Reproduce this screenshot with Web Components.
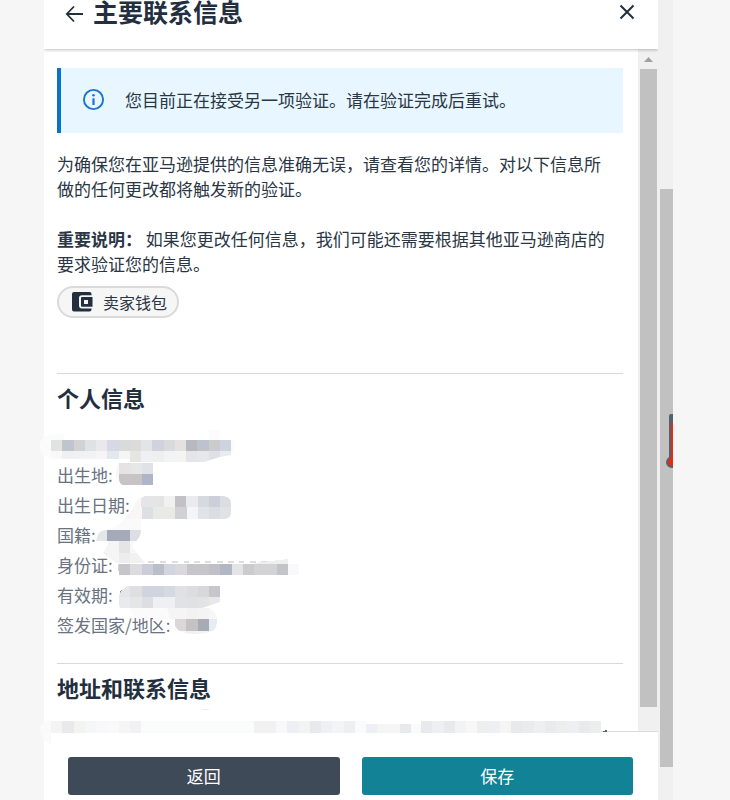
<!DOCTYPE html>
<html lang="zh-CN">
<head>
<meta charset="utf-8">
<title>主要联系信息</title>
<style>
html, body { height: 100%; margin: 0; }
body { background: #f6f6f6; color: #2a3644; font-family: "Noto Sans CJK SC", sans-serif; font-size: 17px; line-height: 25px; overflow: hidden; }
</style>
</head>
<body>
<contact-page></contact-page>
<script>
const define = (name, html, setup) => customElements.define(name, class extends HTMLElement {
  constructor() {
    super();
    this.attachShadow({ mode: 'open' }).innerHTML = html;
  }
});

define('scroll-track', `
<style>
:host { display: flex; flex-direction: column; background: #f0f0f0; box-sizing: border-box; }
i { display: block; flex: 0 0 auto; height: var(--thumb); background: #c1c1c1; }
</style><slot></slot><i></i>`);

define('dialog-header', `
<style>
:host { display: flex; align-items: center; height: 49px; padding: 0 20px 26px; box-sizing: border-box; background: #fff; color: #232f3e; position: relative; z-index: 1; box-shadow: 0 1px 3px rgba(0,0,0,.25); clip-path: inset(0 0 -6px 0); }
button { border: 0; background: none; padding: 0; display: block; flex: none; }
svg { display: block; }
h1 { margin: 0 auto 0 8px; padding-bottom: 2px; font-size: 25px; line-height: 34px; font-weight: 700; }
</style>
<button aria-label="返回"><svg width="21" height="22" viewBox="0 0 21 22" fill="none" stroke="#232f3e" stroke-width="1.8"><path d="M19 13H3M10 5.500L2.800 13L10 20.500"/></svg></button>
<h1><slot></slot></h1>
<button aria-label="关闭"><svg width="22" height="22" viewBox="0 0 22 22" fill="none" stroke="#232f3e" stroke-width="2"><path d="M4.500 4.500L17.500 17.500M17.500 4.500L4.500 17.500"/></svg></button>`);

define('info-alert', `
<style>
:host { display: flex; align-items: center; gap: 20px; height: 65px; box-sizing: border-box; padding: 0 0 2px 21px; border-left: 4px solid #0a72c8; background: #e8f6ff; }
svg { display: block; flex: none; }
</style>
<svg width="23" height="23" viewBox="0 0 23 23"><circle cx="11.500" cy="11.500" r="9.600" fill="none" stroke="#1a76cc" stroke-width="1.900"/><path d="M11.500 10.300V17" stroke="#1a76cc" stroke-width="2.200"/><circle cx="11.500" cy="7.200" r="1.300" fill="#1a76cc"/></svg>
<span><slot></slot></span>`);

define('wallet-chip', `
<style>
:host { display: flex; }
button { display: flex; align-items: center; gap: 10px; height: 32px; padding: 0 10px 1px 13px; border: 2px solid #d8dadb; border-radius: 16px; background: #f6f6f6; color: inherit; font: 16px/24px "Noto Sans CJK SC", sans-serif; }
</style>
<button><svg width="21" height="20" viewBox="0 0 21 20"><path fill="#232f3e" d="M2 0H17.500Q19.500 0 19.500 2V3.200H10Q7 3.200 7 6V13.500Q7 16.500 10 16.500H19.500V17.500Q19.500 19.500 17.500 19.500H2Q0 19.500 0 17.500V2Q0 0 2 0Z"/><path fill="#232f3e" fill-rule="evenodd" d="M10 5H20.500V14.800H10Q9 14.800 9 13.800V6Q9 5 10 5ZM12 8V12H16V8Z"/></svg><slot></slot></button>`);

define('info-section', `
<style>
:host { display: block; border-top: 1px solid #d8d9da; padding-top: 7px; }
h2 { margin: 0; font-size: 22px; line-height: 33px; font-weight: 700; color: #232f3e; }
</style><h2><slot name="title"></slot></h2><slot></slot>`);

define('detail-list', `
<style>
:host { display: block; position: relative; color: #687280; line-height: 30px; padding-top: 16px; }
</style><slot></slot>`);

define('detail-row', `<style>:host { display: block; height: 30px; }</style><slot></slot>`);

const cells = (x, y, h, colors) => colors.split(' ').map((c, i) => {
  const a = Math.round(x + i * 11.25), b = Math.round(x + (i + 1) * 11.25);
  return `<rect x="${a}" y="${y}" width="${b - a}" height="${h}" fill="#${c}"/>`;
}).join('');

/* Redaction painted over the personal values. */
define('personal-mask', `
<style>:host { position: absolute; left: -17px; top: 1px; pointer-events: none; } svg { display: block; }</style>
<svg width="270" height="223" viewBox="40 415 270 223" shape-rendering="crispEdges">
<defs>
<clipPath id="a"><path d="M51 440H231V455L220 457L204 462H130V459H64L51 456Z"/></clipPath>
<clipPath id="c"><path d="M119 463H153V485H123Q119 484 119 478Z"/></clipPath>
<clipPath id="d"><path d="M145 496H224Q231 497 231 504V513Q231 518 225 519H124L132 510L137 500Z"/></clipPath>
<clipPath id="e"><path d="M105 530H141Q141 538 133 544V548L145 563H116L103 553L108 544V541H96Q98 530 105 530Z"/></clipPath>
<clipPath id="g"><path d="M127 586H220V602L202 608H120Q116 600 121 591Z"/></clipPath>
<clipPath id="h"><path d="M167 608H209Q218 612 217 622Q216 633 206 633Q188 636 178 630L170 619Z"/></clipPath>
</defs>
<path fill="#fbfbfb" shape-rendering="auto" d="M51 434Q38 438 40 448Q41 456 51 459H64V434ZM209 430h10v10h-10zM231 439q8 4 0 14z"/>
<g clip-path="url(#a)">${cells(51, 440, 11, 'e2e2e2 bfc4ce d2d2d4 dee2e6 e9e9ec d5d9e3 d9dbda dddad9 e3e4e8 d0d3dc d9dadc e4e1e0 b8b9be bdc3cd cbcacd ced4de')}${cells(51, 451, 12, 'f8f8f8 f0f0f2 f1f1f3 f2f2f3 f5f5f5 e2e8ec f5f5f5 e6e5e3 eff0f3 edeff1 f2f4f3 f4f4f3 e3e5e9 e5e7ea dde1e6 e8ecf1')}</g>
<path fill="#f7f8f8" d="M119 462Q112 474 119 481Z"/>
<g clip-path="url(#c)">${cells(119, 463, 11, 'e6e3e4 e7e7e8 dfe2e9')}${cells(119, 474, 12, 'c8c4c5 c8c4c5 adb5c6')}</g>
<path fill="#fafafa" d="M124 519H141V530H105Q118 528 124 519Z"/>
<g clip-path="url(#d)">${cells(130, 496, 11, 'f8f7f6 e5e4e6 e5e4e4 f1f1f1 c3c1c5 e9ebef d5d9e0 cbcfda dbdde3')}${cells(119, 507, 12, 'f5f5f4 f8f7f6 dddfe5 e9e9e7 e9e9e7 d1d1d4 f2f6fa e1e3e6 dadee3 dfe2e7')}</g>
<g clip-path="url(#e)">${cells(96, 530, 11, 'e3e7e7 a4aab8 a4aab8 dddde3')}${cells(96, 541, 12, 'f5f5f5 f5f5f5 e5e5e6 f8f8f8')}${cells(96, 553, 12, 'ececed f5f5f5 ededee f1f1f2 f1f1f2')}</g>
<path d="M148 562h6m6 0h6m6 0h6m6 0h5m5 0h6m5 0h6m6 0h6m5 0h6m5 0h5m6 0h6m5 0h6" stroke="#dcdee0" stroke-width="2" fill="none"/>
<path fill="#efefef" d="M254 563L288 559V564H254Z"/>
<path fill="#d5d6da" d="M118 564h2v7h-2z"/>
${cells(119, 564, 11, 'c5c5ca dcdbe0 cbceda b9bec9 d1d5df dad8dc c6c5c8 c6c6ca bfc0c8 b1b7c4 e3e4e5 cbcacd d3d3d6 d3d3d6 c3c4c8 f9f9fc')}
<path d="M120 592l2-1" stroke="#606a78" stroke-width="2"/>
<g clip-path="url(#g)">${cells(119, 586, 11, 'e6e6e8 dfdfe1 cfd4df cfd4df d5d9e2 e1e1e3 dddde0 d8d8db c8c6cd e8e8e9')}${cells(119, 597, 12, 'e9eaee e5e6ea dcdee4 eff0f1 eff0f1 e1e2e5 e0e1e3 e3e3e4 e7e8ea')}</g>
<path fill="#fbfbfb" d="M130 608H175V620H153V618H134Z"/>
<g clip-path="url(#h)">${cells(164, 608, 11, 'f5f5f6 f5f5f6 f2f2f3 f4f4f5 f7f7f8')}${cells(175, 619, 12, 'd9d7d8 c5c2c2 a6abb5 e6ecf5')}${cells(175, 631, 4, 'f8f8f8 f1f1f2 f3f3f4')}</g>
</svg>`);

define('address-mask', `
<style>:host { position: absolute; left: -17px; top: 3px; z-index: 2; pointer-events: none; } svg { display: block; }</style>
<svg width="570" height="37" viewBox="40 707 570 37" shape-rendering="crispEdges">
<path fill="#eeeeef" d="M200 709h9v1h-6z"/>
<path fill="#fafafa" shape-rendering="auto" d="M51 719Q40 722 40 730Q41 740 51 744Z"/>
${cells(51, 721, 12, 'f4f4f5 e9e9ec f3f3f2 f5f6f8 f8f8fb f8fafa f6f5f6 f1f1f4 fafcfb fafcfb fafcfb fafcfb fafcfb fafcfb fafcfb fafcfb fafcfb fafcfb f1f1f2 f1f1f2 f8f8fa eeeef5 f3f3f4 e8e9ec eff0f3 f4f4f6 eeeff1 fafcfb')}
${cells(366, 724, 9, 'eeeff5 f5f5f6 f5f5f6 e8e9eb fafafa')}
${cells(421, 721, 12, 'e8e9ec eeeff2 e8e9eb f2f3f5 f7f7f7 eeeeef edeff2 f5f6f4 e8e9eb eaebed eeeff1 e9eaec eceded eeeff2 e9eaec eceded')}
<path fill="#53647b" d="M603 731h2v-1h2v2h-4z"/>
</svg>`);

define('dialog-footer', `
<style>
:host { display: grid; grid-template-columns: 1fr 1fr; gap: 22px; padding: 25px 25px 5px 24px; background: #fff; border-top: 1px solid #d9dbdc; position: relative; z-index: 1; }
button { height: 38px; border: 0; border-radius: 3px; padding: 0 0 2px; color: #fff; background: #3f4a59; font: 17px/25px "Noto Sans CJK SC", sans-serif; }
.primary { background: #128297; }
</style>
<button>返回</button><button class="primary">保存</button>`);

define('contact-page', `
<style>
:host { display: grid; grid-template-columns: minmax(0, 1fr) 15px; height: 100vh; margin: 0 57px 0 44px; position: relative; }
main { display: flex; flex-direction: column; background: #fff; min-height: 0; }
.body { flex: 1; min-height: 0; display: grid; grid-template-columns: minmax(0, 1fr) 20px; }
.content { padding: 19px 15px 0 13px; min-width: 0; min-height: 0; height: 0; }
p { margin: 0 0 25px; padding-right: 10px; }
info-alert { margin-bottom: 18px; }
.note { margin-bottom: 10px; }
wallet-chip { margin-bottom: 55px; }
.personal { height: 282px; }
.address-value { position: relative; height: 25px; }
.inner { --thumb: 638px; padding: 0 1px 0 2px; }
.inner svg { display: block; flex: none; align-self: center; }
.outer { --thumb: 578px; padding: 189px 0 0 2px; }
.gauge { position: absolute; right: 0; top: 412px; }
</style>
<main>
<dialog-header>主要联系信息</dialog-header>
<div class="body">
<div class="content">
<info-alert>您目前正在接受另一项验证。请在验证完成后重试。</info-alert>
<p>为确保您在亚马逊提供的信息准确无误，请查看您的详情。对以下信息所做的任何更改都将触发新的验证。</p>
<p class="note"><b>重要说明：</b> 如果您更改任何信息，我们可能还需要根据其他亚马逊商店的要求验证您的信息。</p>
<wallet-chip>卖家钱包</wallet-chip>
<info-section class="personal"><span slot="title">个人信息</span>
<detail-list>
<detail-row></detail-row>
<detail-row>出生地:</detail-row>
<detail-row>出生日期:</detail-row>
<detail-row>国籍:</detail-row>
<detail-row>身份证:</detail-row>
<detail-row>有效期:</detail-row>
<detail-row>签发国家/地区:</detail-row>
<personal-mask></personal-mask>
</detail-list>
</info-section>
<info-section><span slot="title">地址和联系信息</span>
<div class="address-value"><address-mask></address-mask></div>
</info-section>
</div>
<scroll-track class="inner"><svg width="11" height="20" viewBox="0 0 11 20"><path d="M1 13L5.500 8L10 13Z" fill="#a0a0a0"/></svg></scroll-track>
</div>
<dialog-footer></dialog-footer>
</main>
<scroll-track class="outer"></scroll-track>
<svg class="gauge" width="8" height="58" viewBox="0 0 8 58"><path d="M8 2H6Q4 2 4 4V45Q1 47 1 51Q2 56 8 56Z" fill="#53626d"/><path d="M6 11H8V54Q3 54 3 50Q3 47 6 46Z" fill="#e52b12"/></svg>`);
</script>
</body>
</html>
